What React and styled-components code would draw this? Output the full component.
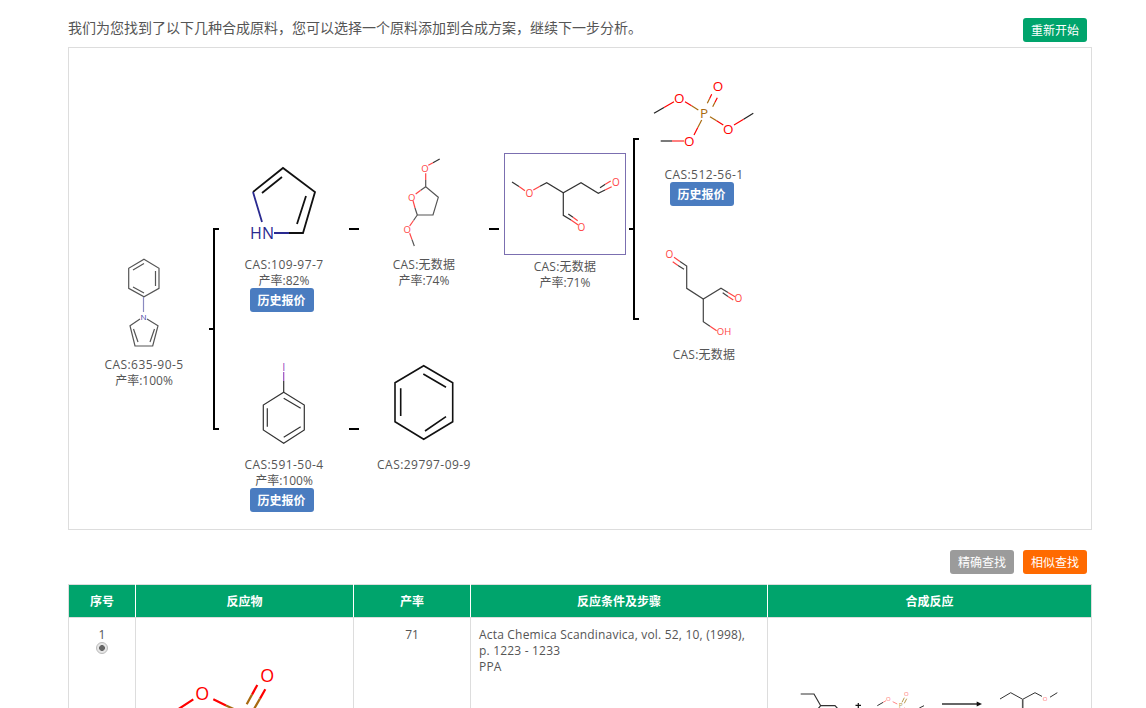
import React from 'react';
import styled, {createGlobalStyle} from 'styled-components';

const GlobalStyle = createGlobalStyle`
    html, body {
        margin: 0;
        padding: 0;
        background: #fff;
        overflow: hidden;
    }
    body {
        font-family: "Open Sans", "Noto Sans CJK SC", sans-serif;
        font-size: 12px;
        color: #555;
    }
`;

const Page = styled.div`
    width: 1024px;
    height: 708px;
    margin-left: 68px;
    overflow: hidden;
`;

const TopBar = styled.div`
    display: flex;
    justify-content: space-between;
    align-items: flex-start;
    height: 47px;
    padding: 18px 5px 0 0;
    box-sizing: border-box;
`;

const Intro = styled.p`
    margin: 0;
    font-size: 14px;
    line-height: 20px;
    color: #555;
`;

const Button = styled.button`
    display: block;
    box-sizing: border-box;
    width: 64px;
    height: 24px;
    padding: 2px 0 0;
    border: 0;
    border-radius: 3px;
    background: ${p => p.$bg || '#00a46c'};
    color: #fff;
    font-family: inherit;
    font-size: 12px;
    line-height: 22px;
    text-align: center;
`;

const QuoteButton = styled(Button)`
    margin: -1px 5px 0 0;
    background: #4a7cc0;
    font-weight: 700;
`;

const RoutePanel = styled.div`
    position: relative;
    height: 483px;
    box-sizing: border-box;
    border: 1px solid #ddd;
`;

const Node = styled.div`
    position: absolute;
    left: ${p => p.$x}px;
    top: ${p => p.$y}px;
    width: ${p => p.$w}px;
    display: flex;
    flex-direction: column;
    align-items: center;
    line-height: 16px;
    color: #555;
    white-space: nowrap;
`;

const CasNumber = styled.span`
    letter-spacing: ${p => (p.$empty ? 0.25 : 0.45)}px;
`;

const Mol = styled.svg`
    display: block;
    margin-bottom: ${p => p.$gap || 0}px;
    overflow: visible;
`;

const SelectedMol = styled.div`
    box-sizing: border-box;
    width: 122px;
    height: 102px;
    margin-bottom: 4px;
    border: 1px solid #7b6fb0;
`;

const Bracket = styled.div`
    position: absolute;
    left: ${p => p.$x}px;
    top: ${p => p.$y}px;
    width: 6px;
    height: ${p => p.$h}px;
    box-sizing: border-box;
    border: 2px solid #000;
    border-right-width: 0;
    &::before {
        content: '';
        position: absolute;
        left: -6px;
        top: 50%;
        width: 5px;
        height: 2px;
        margin-top: -1px;
        background: #000;
    }
`;

const Dash = styled.div`
    position: absolute;
    left: ${p => p.$x}px;
    top: ${p => p.$y}px;
    width: 10px;
    height: 2px;
    background: #000;
`;

const SearchBar = styled.div`
    display: flex;
    justify-content: flex-end;
    gap: 9px;
    height: 54px;
    padding: 20px 5px 0 0;
    box-sizing: border-box;
`;

const Table = styled.table`
    width: 1023px;
    border-collapse: collapse;
    table-layout: fixed;
    color: #555;
`;

const Head = styled.th`
    height: 32px;
    padding: 0;
    border: 1px solid #ddd;
    border-left-color: ${p => (p.$first ? '#ddd' : '#fff')};
    border-right-color: ${p => (p.$last ? '#ddd' : '#fff')};
    background: #00a46c;
    color: #fff;
    font-size: 12px;
    font-weight: 700;
`;

const Cell = styled.td`
    height: 300px;
    padding: 9px 8px 0;
    border: 1px solid #ddd;
    vertical-align: top;
    line-height: 16px;
    text-align: ${p => p.$align || 'left'};
`;

const Citation = styled.div`
    letter-spacing: 0.19px;
`;

const CellArt = styled.div`
    display: flex;
    justify-content: center;
    margin-top: ${p => p.$top}px;
`;

const Radio = styled.span`
    display: block;
    box-sizing: border-box;
    width: 12px;
    height: 12px;
    margin: -1px auto 0;
    border: 1px solid #bbb;
    border-radius: 50%;
    background: radial-gradient(circle, #666 0 2.6px, #e6e6e6 3.2px);
`;

const Bond = ({d, c = '#333', w = 1.2}) => <path d={d} fill="none" stroke={c} strokeWidth={w} />;

const Atom = ({x, y, s = 10, c = RED, children}) => (
    <text x={x} y={y} fontSize={s} fill={c} textAnchor="middle" dominantBaseline="central" fontFamily="Open Sans, sans-serif">
        {children}
    </text>
);

const RED = '#f44';
const BROWN = '#a86a10';
const NAVY = '#2a2a90';

const PhenylPyrrole = () => (
    <Mol width="34" height="90" viewBox="0 0 34 90" $gap={9}>
        <Bond d="M17 1.3L32 10.3L32 30.3L17 38.7L1.7 30.3L1.7 10.3Z" c="#555" />
        <Bond d="M6 12L17 5.5M28.5 13L28.5 28M6 29L17 35" c="#555" />
        <Bond d="M16.5 39L16.5 54" c="#8a8ac0" />
        <Atom x={16.5} y={58} s={8} c="#3a3aa0">N</Atom>
        <Bond d="M13 61L3 67.7L8 88L25.7 88L31 67.7L20 61" c="#555" />
        <Bond d="M6.5 71L11 84M27.5 71L23 84" c="#555" />
    </Mol>
);

const Pyrrole = () => (
    <Mol width="68" height="72" viewBox="0 0 68 72" $gap={18}>
        <Bond d="M39 66L53 66L65 25L33 1L3 25" c="#111" w={1.8} />
        <Bond d="M3 25L12 55M24 66L39 66" c={NAVY} w={1.8} />
        <Bond d="M32 10L12 26M56 29L47 57" c="#111" w={1.8} />
        <Atom x={12} y={66} s={16} c={NAVY}>HN</Atom>
    </Mol>
);

const Iodobenzene = () => (
    <Mol width="44" height="84" viewBox="0 0 44 84" $gap={12}>
        <Atom x={21.7} y={5.7} s={11} c="#9a4fc0">I</Atom>
        <Bond d="M21.7 11L21.7 20" c="#9a4fc0" />
        <Bond d="M21.7 20L21.7 31.3" c="#333" />
        <Bond d="M21.7 31.3L42.3 44L42.3 69L21.7 82.3L1.3 69L1.3 44Z" c="#333" />
        <Bond d="M21.7 37.3L38.7 47.3M38.7 65.7L21.7 76.3M5.3 47.3L5.3 65.7" c="#333" />
    </Mol>
);

const Benzene = () => (
    <Mol width="60" height="76" viewBox="0 0 60 76" $gap={16}>
        <Bond d="M29.7 .7L58.7 17.7L58.7 56.7L29.7 74.3L1 56.7L1 17.7Z" c="#111" w={1.6} />
        <Bond d="M29.3 9L52 22.3M52 51.7L31 66M6.7 23.3L6.7 51" c="#111" w={1.6} />
    </Mol>
);

const Furan = () => (
    <Mol width="50" height="90" viewBox="0 0 50 90" $gap={9}>
        <Bond d="M40.7 1L34 4.7" c="#333" />
        <Bond d="M34 4.7L29.3 7.3" c={RED} />
        <Atom x={26} y={10.3} s={9.5}>O</Atom>
        <Bond d="M26.7 15.3L26.7 22" c={RED} />
        <Bond d="M26.7 22L26.7 28.7L39.3 39.3L34 57L18.3 57" c="#555" />
        <Bond d="M26.7 28.7L21.7 32.3" c="#555" />
        <Bond d="M21.7 32.3L16.7 36" c={RED} />
        <Atom x={12.7} y={39.3} s={9.5}>O</Atom>
        <Bond d="M14 42.7L16 50" c={RED} />
        <Bond d="M16 50L18.3 57L14.5 62.5" c="#555" />
        <Bond d="M14.5 62.5L10.7 68" c={RED} />
        <Atom x={8.3} y={71.3} s={9.5}>O</Atom>
        <Bond d="M10.7 75.3L13 81.6" c={RED} />
        <Bond d="M13 81.6L15.3 88" c="#555" />
    </Mol>
);

const Methoxy = () => (
    <Mol width="120" height="100" viewBox="0 0 120 100">
        <Bond d="M7 28L14 32.5" c="#333" />
        <Bond d="M14 32.5L20 36.7M28.3 36L35 32.3" c={RED} />
        <Atom x={24.3} y={39.3}>O</Atom>
        <Bond d="M35 32.3L41.7 28.7L58.3 38.7L76 28.7L93.3 39.3L100 36M95 33.7L100.3 30.3" c="#333" />
        <Bond d="M100 36L106.7 32.7M100.3 30.3L105.7 27" c={RED} />
        <Atom x={111} y={28.3}>O</Atom>
        <Bond d="M58.3 38.7L58.3 61.3L66 66M63.3 60L68 63.3" c="#333" />
        <Bond d="M66 66L73.3 71M68 63.3L72.7 66.7" c={RED} />
        <Atom x={76.3} y={72.7}>O</Atom>
    </Mol>
);

const Phosphate = () => (
    <Mol width="104" height="70" viewBox="0 0 104 70" $gap={19}>
        <Bond d="M2 35.3L12 29.5" c="#222" />
        <Bond d="M12 29.5L22 23.7M33 23.7L39.6 27.8" c="#f00" />
        <Atom x={27.3} y={19.7} s={13.5} c="#f00">O</Atom>
        <Bond d="M39.6 27.8L46.3 32" c={BROWN} />
        <Atom x={52} y={35.3} s={13.5} c={BROWN}>P</Atom>
        <Bond d="M55.3 25.3L57.5 20.8M60.7 28.7L63 24.2" c={BROWN} />
        <Bond d="M57.5 20.8L59.7 16.3M63 24.2L65.3 19.7" c="#f00" />
        <Atom x={66} y={8} s={13.5} c="#f00">O</Atom>
        <Bond d="M58 38.7L64.6 42.8" c={BROWN} />
        <Bond d="M64.6 42.8L71.3 47M82 47L91.6 41.2" c="#f00" />
        <Atom x={76.3} y={51} s={13.5} c="#f00">O</Atom>
        <Bond d="M91.6 41.2L101.3 35.3" c="#222" />
        <Bond d="M49.7 42L45.8 49.5" c={BROWN} />
        <Bond d="M45.8 49.5L42 57M20 63L32 63" c="#f00" />
        <Atom x={37.3} y={63} s={13.5} c="#f00">O</Atom>
        <Bond d="M8.7 63L20 63" c="#222" />
    </Mol>
);

const Hydroxy = () => (
    <Mol width="80" height="88" viewBox="0 0 80 88" $gap={9}>
        <Atom x={5.3} y={4.3}>O</Atom>
        <Bond d="M10 7.3L16 11.5M8.7 11.7L14 15.5" c={RED} />
        <Bond d="M16 11.5L22.7 16L22.7 38.3L39.3 49L57 38.3L64 42.5M14 15.5L20 19.3" c="#444" />
        <Bond d="M64 42.5L71 46.7M64 46.4L69.3 50" c={RED} />
        <Bond d="M58.7 42.7L64 46.4" c="#444" />
        <Atom x={74.3} y={48.3}>O</Atom>
        <Bond d="M39.3 49L39.3 71.7L46 76.2" c="#444" />
        <Bond d="M46 76.2L52.7 80.7" c={RED} />
        <Atom x={60} y={81.7} s={9.5}>OH</Atom>
    </Mol>
);

const LargeReactant = () => (
    <Mol width="150" height="60" viewBox="0 0 150 60">
        <Bond d="M4 47L23.3 34.3M43.3 34.3L56 40.4" c="#f00" w={2.2} />
        <Atom x={32.3} y={27.7} s={18} c="#f00">O</Atom>
        <Bond d="M56 40.4L70 47" c={BROWN} w={2.2} />
        <Bond d="M87.3 20L82 29.6M95.3 24.3L90 33.6" c="#f00" w={2.2} />
        <Bond d="M82 29.6L76.7 39.3M90 33.6L80 51" c={BROWN} w={2.2} />
        <Atom x={97.3} y={10.3} s={18} c="#f00">O</Atom>
    </Mol>
);

const ReactionScheme = () => (
    <Mol width="269" height="30" viewBox="0 0 269 30">
        <Bond d="M5.7 4L19 4L25.7 15.7L40 15.7L44 20M25.7 15.7L22 20" c="#333" />
        <Bond d="M60.5 15.3L66 15.3M63.3 13L63.3 18" c="#111" />
        <Bond d="M82.3 15.7L88 12.4" c="#333" w={1} />
        <Bond d="M88 12.4L91 10.7M97.7 11.7L102.3 14" c="#f88" w={1} />
        <Atom x={93.3} y={9} s={6} c="#f77">O</Atom>
        <Atom x={105.7} y={15} s={6.5} c="#b99a50">P</Atom>
        <Bond d="M107 12.3L109.3 7.7M109.3 13.3L111.7 8.7" c="#b99a50" w={1} />
        <Atom x={111.3} y={4} s={6} c="#f77">O</Atom>
        <Bond d="M109 17.7L112 20" c="#f88" w={1} />
        <Bond d="M124.3 18L129 15.7" c="#333" w={1} />
        <Bond d="M147 14L182 14" c="#666" w={2.2} />
        <path d="M181.7 11.5L187 14L181.7 16.5Z" fill="#111" />
        <Bond d="M205 9L215.7 2.7L227.7 9.3L240 2.7L247 6.4M255 7.2L262.3 2.7" c="#333" w={1} />
        <Bond d="M227.7 9.3L227.7 20" c="#555" w={1.6} />
        <Atom x={250} y={9} s={6} c="#f77">O</Atom>
    </Mol>
);

const App = () => (
    <Page>
        <GlobalStyle />
        <TopBar>
            <Intro>我们为您找到了以下几种合成原料，您可以选择一个原料添加到合成方案，继续下一步分析。</Intro>
            <Button>重新开始</Button>
        </TopBar>
        <RoutePanel>
            <Node $x={25} $y={210} $w={100}>
                <PhenylPyrrole />
                <CasNumber>CAS:635-90-5</CasNumber>
                <span>产率:100%</span>
            </Node>
            <Bracket $x={144} $y={180} $h={202} />
            <Node $x={165} $y={119} $w={100}>
                <Pyrrole />
                <CasNumber>CAS:109-97-7</CasNumber>
                <span>产率:82%</span>
                <QuoteButton>历史报价</QuoteButton>
            </Node>
            <Node $x={165} $y={313} $w={100}>
                <Iodobenzene />
                <CasNumber>CAS:591-50-4</CasNumber>
                <span>产率:100%</span>
                <QuoteButton>历史报价</QuoteButton>
            </Node>
            <Dash $x={280} $y={180} />
            <Dash $x={280} $y={380} />
            <Node $x={305} $y={110} $w={100}>
                <Furan />
                <CasNumber $empty>CAS:无数据</CasNumber>
                <span>产率:74%</span>
            </Node>
            <Node $x={305} $y={317} $w={100}>
                <Benzene />
                <CasNumber>CAS:29797-09-9</CasNumber>
            </Node>
            <Dash $x={420} $y={180} />
            <Node $x={435} $y={105} $w={122}>
                <SelectedMol>
                    <Methoxy />
                </SelectedMol>
                <CasNumber $empty>CAS:无数据</CasNumber>
                <span>产率:71%</span>
            </Node>
            <Bracket $x={564} $y={90} $h={182} />
            <Node $x={585} $y={30} $w={100}>
                <Phosphate />
                <CasNumber>CAS:512-56-1</CasNumber>
                <QuoteButton>历史报价</QuoteButton>
            </Node>
            <Node $x={595} $y={202} $w={80}>
                <Hydroxy />
                <CasNumber $empty>CAS:无数据</CasNumber>
            </Node>
        </RoutePanel>
        <SearchBar>
            <Button $bg="#9b9b9b">精确查找</Button>
            <Button $bg="#ff6a00">相似查找</Button>
        </SearchBar>
        <Table>
            <colgroup>
                <col width="67" />
                <col width="218" />
                <col width="117" />
                <col width="297" />
                <col width="324" />
            </colgroup>
            <thead>
                <tr>
                    <Head $first>序号</Head>
                    <Head>反应物</Head>
                    <Head>产率</Head>
                    <Head>反应条件及步骤</Head>
                    <Head $last>合成反应</Head>
                </tr>
            </thead>
            <tbody>
                <tr>
                    <Cell $align="center">
                        1
                        <Radio />
                    </Cell>
                    <Cell>
                        <CellArt $top={38}>
                            <LargeReactant />
                        </CellArt>
                    </Cell>
                    <Cell $align="center">71</Cell>
                    <Cell>
                        <Citation>
                            Acta Chemica Scandinavica, vol. 52, 10, (1998),
                            <br />
                            p. 1223 - 1233
                            <br />
                            PPA
                        </Citation>
                    </Cell>
                    <Cell>
                        <CellArt $top={63}>
                            <ReactionScheme />
                        </CellArt>
                    </Cell>
                </tr>
            </tbody>
        </Table>
    </Page>
);

export default App;
